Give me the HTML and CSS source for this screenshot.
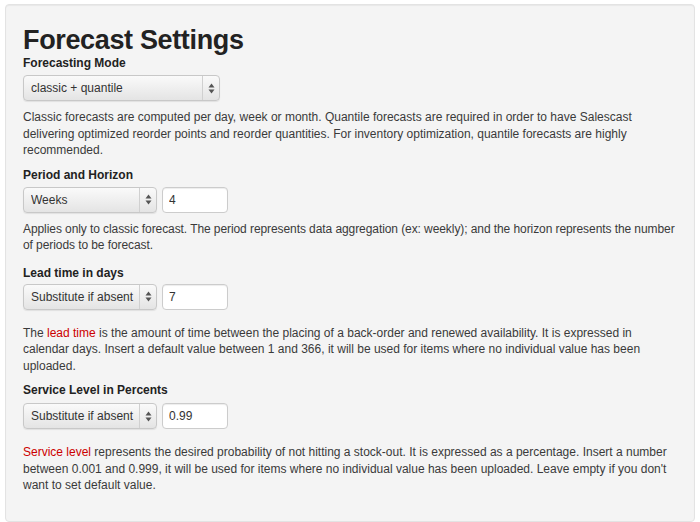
FILE: index.html
```html
<!DOCTYPE html>
<html lang="en">
<head>
  <meta charset="UTF-8">
  <title>Forecast Settings</title>
  <link rel="stylesheet" href="styles.css">
</head>
<body>
  <div class="well">
    <h1>Forecast Settings</h1>

    <div class="field">
      <label class="field-label">Forecasting Mode</label>
      <div class="controls">
        <div class="select wide">
          <select>
            <option>classic + quantile</option>
            <option>classic</option>
            <option>quantile</option>
          </select>
          <span class="arrows"><svg width="7" height="11" viewBox="0 0 7 11"><path d="M3.5 0.5 L6.5 4.5 H0.5 Z M3.5 10.5 L6.5 6.5 H0.5 Z" fill="#555"/></svg></span>
        </div>
      </div>
      <p class="help">Classic forecasts are computed per day, week or month. Quantile forecasts are required in order to have Salescast delivering optimized reorder points and reorder quantities. For inventory optimization, quantile forecasts are highly recommended.</p>
    </div>

    <div class="field">
      <label class="field-label">Period and Horizon</label>
      <div class="controls">
        <div class="select">
          <select>
            <option>Weeks</option>
            <option>Days</option>
            <option>Months</option>
          </select>
          <span class="arrows"><svg width="7" height="11" viewBox="0 0 7 11"><path d="M3.5 0.5 L6.5 4.5 H0.5 Z M3.5 10.5 L6.5 6.5 H0.5 Z" fill="#555"/></svg></span>
        </div>
        <input type="text" value="4">
      </div>
      <p class="help tight">Applies only to classic forecast. The period represents data aggregation (ex: weekly); and the horizon represents the number of periods to be forecast.</p>
    </div>

    <div class="field">
      <label class="field-label">Lead time in days</label>
      <div class="controls">
        <div class="select">
          <select>
            <option>Substitute if absent</option>
            <option>Always use</option>
          </select>
          <span class="arrows"><svg width="7" height="11" viewBox="0 0 7 11"><path d="M3.5 0.5 L6.5 4.5 H0.5 Z M3.5 10.5 L6.5 6.5 H0.5 Z" fill="#555"/></svg></span>
        </div>
        <input type="text" value="7">
      </div>
      <p class="help spaced">The <span class="term">lead time</span> is the amount of time between the placing of a back-order and renewed availability. It is expressed in calendar days. Insert a default value between 1 and 366, it will be used for items where no individual value has been uploaded.</p>
    </div>

    <div class="field last">
      <label class="field-label">Service Level in Percents</label>
      <div class="controls">
        <div class="select">
          <select>
            <option>Substitute if absent</option>
            <option>Always use</option>
          </select>
          <span class="arrows"><svg width="7" height="11" viewBox="0 0 7 11"><path d="M3.5 0.5 L6.5 4.5 H0.5 Z M3.5 10.5 L6.5 6.5 H0.5 Z" fill="#555"/></svg></span>
        </div>
        <input type="text" value="0.99">
      </div>
      <p class="help spaced"><span class="term">Service level</span> represents the desired probability of not hitting a stock-out. It is expressed as a percentage. Insert a number between 0.001 and 0.999, it will be used for items where no individual value has been uploaded. Leave empty if you don't want to set default value.</p>
    </div>
  </div>
</body>
</html>
```

FILE: styles.css
```css
body {
  margin: 0;
  padding: 4px 5px;
  font-family: "Liberation Sans", Arial, sans-serif;
  font-size: 12px;
  color: #333;
  background: #fff;
}

.well {
  background-color: #f4f4f4;
  border: 1px solid #e3e3e3;
  border-radius: 4px;
  box-shadow: inset 0 1px 1px rgba(0, 0, 0, 0.05);
  padding: 20px 17px 27px;
}

h1 {
  margin: 0;
  font-size: 27px;
  line-height: 30px;
  font-weight: bold;
  color: #222;
  letter-spacing: -0.35px;
}

.field {
  margin-bottom: 8px;
}

.field:nth-child(3) {
  margin-bottom: 11px;
}

.field:nth-child(4) {
  margin-bottom: 8px;
}

.field.last {
  margin-bottom: 0;
}

.field-label {
  display: block;
  font-weight: bold;
  font-size: 12px;
  line-height: 16px;
  color: #222;
  margin-bottom: 4px;
}

.field:nth-child(4) .field-label {
  margin-bottom: 3px;
}

.field.last .field-label {
  margin-bottom: 5px;
}

.controls {
  display: flex;
  gap: 5px;
  height: 26px;
}

.select {
  position: relative;
  width: 134px;
  height: 26px;
  box-sizing: border-box;
  border: 1px solid #c8c8c8;
  border-radius: 4px;
  background: linear-gradient(#fafafa, #e4e4e4);
  box-shadow: 0 1px 1px rgba(0, 0, 0, 0.08);
}

.select.wide {
  width: 197px;
}

.select select {
  appearance: none;
  -webkit-appearance: none;
  width: 100%;
  height: 100%;
  border: none;
  background: transparent;
  font-family: inherit;
  font-size: 12px;
  color: #333;
  padding: 0 22px 0 7px;
  outline: none;
}

.arrows {
  position: absolute;
  right: 0;
  top: 0;
  bottom: 0;
  width: 16px;
  border-left: 1px solid #d0d0d0;
  display: flex;
  align-items: center;
  justify-content: center;
  pointer-events: none;
}

.controls input {
  width: 66px;
  height: 26px;
  box-sizing: border-box;
  border: 1px solid #ccc;
  border-radius: 4px;
  background: #fff;
  box-shadow: inset 0 1px 1px rgba(0, 0, 0, 0.075);
  font-family: inherit;
  font-size: 12px;
  color: #333;
  padding: 0 6px;
}

.help {
  margin: 8px 0 0;
  line-height: 16.5px;
  color: #3a3a3a;
}

.help.tight {
  letter-spacing: -0.08px;
}

.help.spaced {
  margin-top: 15px;
}

.term {
  color: #c00;
}
```
